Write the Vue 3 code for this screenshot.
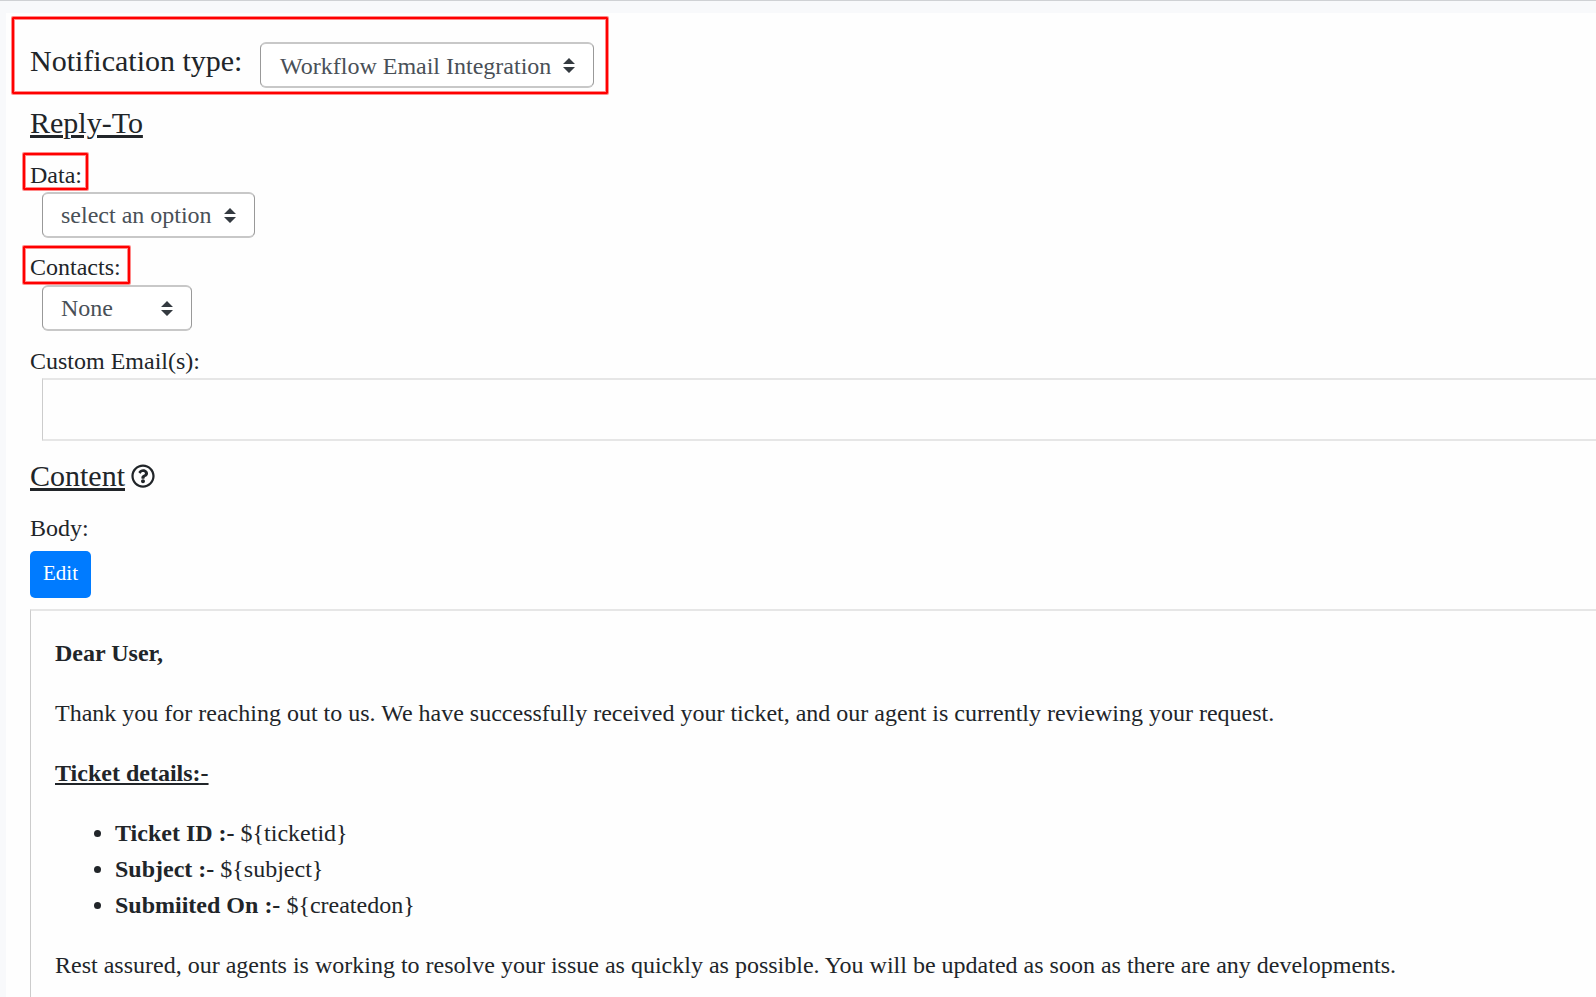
<script setup>
import { ref } from 'vue'

const notificationType = ref('Workflow Email Integration')
const dataOption = ref('select an option')
const contact = ref('None')

const ticketFields = [
  { label: 'Ticket ID', value: '${ticketid}' },
  { label: 'Subject', value: '${subject}' },
  { label: 'Submiited On', value: '${createdon}' }
]
</script>

<template>
  <div class="page">
    <main class="panel">
      <div class="type-row">
        <h4 class="heading">Notification type:</h4>
        <div class="select select-type">
          <span>{{ notificationType }}</span>
          <svg class="caret" viewBox="0 0 4 5"><path d="M2 0L0 2h4zm0 5L0 3h4z" /></svg>
        </div>
        <div class="highlight highlight-type"></div>
      </div>

      <h4 class="heading underlined reply">Reply-To</h4>

      <div class="field field-data">
        <label class="label">Data:</label>
        <div class="select select-data">
          <span>{{ dataOption }}</span>
          <svg class="caret" viewBox="0 0 4 5"><path d="M2 0L0 2h4zm0 5L0 3h4z" /></svg>
        </div>
        <div class="highlight highlight-data"></div>
      </div>

      <div class="field field-contacts">
        <label class="label">Contacts:</label>
        <div class="select select-contacts">
          <span>{{ contact }}</span>
          <svg class="caret" viewBox="0 0 4 5"><path d="M2 0L0 2h4zm0 5L0 3h4z" /></svg>
        </div>
        <div class="highlight highlight-contacts"></div>
      </div>

      <div class="field field-emails">
        <label class="label">Custom Email(s):</label>
        <div class="emails"></div>
      </div>

      <div class="content-row">
        <h4 class="heading underlined">Content</h4>
        <svg class="help" viewBox="0 0 512 512">
          <path d="M256 8C119.043 8 8 119.083 8 256c0 136.997 111.043 248 248 248s248-111.003 248-248C504 119.083 392.957 8 256 8zm0 448c-110.532 0-200-89.431-200-200 0-110.495 89.472-200 200-200 110.491 0 200 89.471 200 200 0 110.53-89.431 200-200 200zm107.244-255.2c0 67.052-72.421 68.084-72.421 92.863V300c0 6.627-5.373 12-12 12h-45.647c-6.627 0-12-5.373-12-12v-8.659c0-35.745 27.1-50.034 47.579-61.516 17.561-9.845 28.324-16.541 28.324-29.579 0-17.246-21.999-28.693-39.784-28.693-23.189 0-33.894 10.977-48.942 29.969-4.057 5.12-11.46 6.071-16.666 2.124l-27.824-21.098c-5.107-3.872-6.251-11.066-2.644-16.363C184.846 131.491 214.94 112 261.794 112c49.071 0 101.45 38.304 101.45 88.8zM298 368c0 23.159-18.841 42-42 42s-42-18.841-42-42 18.841-42 42-42 42 18.841 42 42z" />
        </svg>
      </div>

      <label class="label">Body:</label>
      <button class="btn" type="button">Edit</button>

      <div class="preview">
        <p><b>Dear User,</b></p>
        <p>Thank you for reaching out to us. We have successfully received your ticket, and our agent is currently reviewing your request.</p>
        <p><b class="underlined">Ticket details:-</b></p>
        <ul>
          <li v-for="field in ticketFields" :key="field.label">
            <b>{{ field.label }} :-</b> {{ field.value }}
          </li>
        </ul>
        <p>Rest assured, our agents is working to resolve your issue as quickly as possible. You will be updated as soon as there are any developments.</p>
      </div>
    </main>
  </div>
</template>

<style>
body {
  margin: 0;
  overflow: hidden;
}
</style>

<style scoped>
.page {
  box-sizing: border-box;
  height: 997px;
  padding: 12px 0 0 6px;
  border-top: 1px solid #cfd1d4;
  background: #f8f9fb;
  color: #212529;
  font-family: "Liberation Serif", "Times New Roman", serif;
  font-size: 24px;
  line-height: 36px;
  overflow: hidden;
}

.panel {
  box-sizing: border-box;
  height: 984px;
  padding: 29px 0 0 24px;
  background: #fefefe;
  overflow: hidden;
}

.heading {
  margin: 0;
  font-size: 30px;
  font-weight: 400;
  line-height: 36px;
}

.underlined {
  text-decoration: underline;
}

.type-row {
  position: relative;
  display: flex;
  align-items: flex-start;
  height: 46px;
}

.type-row .heading {
  width: 230px;
  padding-top: 1px;
}

.reply {
  margin: 17px 0 16px;
}

.field {
  position: relative;
}

.field-data {
  height: 92px;
}

.field-contacts {
  height: 94px;
}

.field-emails {
  height: 98px;
}

.label {
  display: block;
}

.select {
  box-sizing: border-box;
  display: flex;
  align-items: center;
  justify-content: space-between;
  height: 46px;
  padding: 0 18px;
  border: solid #999;
  border-width: 2px 1px;
  border-top-color: #c8c8c8;
  border-bottom-color: #c8c8c8;
  border-radius: 6px;
  background: #fff;
  color: #495057;
}

.select-type {
  width: 334px;
  padding-left: 19px;
}

.select-type span {
  padding-top: 2px;
}

.select-data {
  width: 213px;
  margin: -1px 0 0 12px;
}

.select-contacts {
  width: 150px;
  margin-left: 12px;
}

.caret {
  width: 12px;
  height: 15px;
  fill: #343a40;
}

/* red callout frames */
.highlight {
  position: absolute;
  box-sizing: border-box;
  border: 2px solid #f00;
  border-radius: 1px;
  box-shadow: 0 0 0 1px rgba(255, 0, 0, 0.45), inset 0 0 0 1px rgba(255, 0, 0, 0.45);
}

.highlight-type {
  top: -25px;
  left: -18px;
  width: 596px;
  height: 77px;
}

.highlight-data {
  top: -4px;
  left: -7px;
  width: 65px;
  height: 37px;
}

.highlight-contacts {
  top: -3px;
  left: -7px;
  width: 107px;
  height: 38px;
}

.emails {
  box-sizing: border-box;
  height: 63px;
  margin: -1px 0 0 12px;
  border: solid #e6e6e6;
  border-width: 2px 0 2px 1px;
  border-left-color: #ccc;
}

.content-row {
  display: flex;
  margin: 17px 0 16px;
}

.help {
  width: 24px;
  height: 24px;
  margin: 6px 0 0 6px;
  fill: #212529;
}

.btn {
  display: block;
  width: 61px;
  height: 47px;
  margin: 5px 0 11px;
  padding: 0 0 3px;
  border: 0;
  border-radius: 5px;
  background: #007bff;
  color: #fff;
  font-family: inherit;
  font-size: 21px;
  line-height: 32px;
}

.preview {
  height: 500px;
  padding: 24px;
  border: solid #e6e6e6;
  border-width: 2px 0 0 1px;
  border-left-color: #ccc;
}

.preview p,
.preview ul {
  margin: 0 0 24px;
}

.preview ul {
  padding-left: 60px;
}
</style>
